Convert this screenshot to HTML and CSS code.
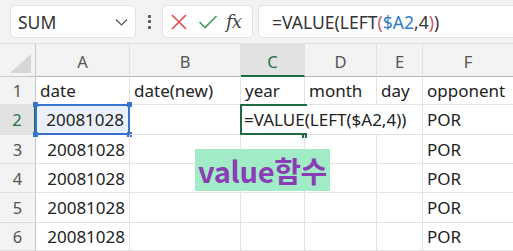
FILE: index.html
```html
<!DOCTYPE html>
<html>
<head>
<meta charset="utf-8">
<link rel="stylesheet" href="styles.css">
</head>
<body>
<div class="app">
  <div class="toolbar">
    <div class="namebox">
      <span class="name">SUM</span>
      <svg class="chev" width="13" height="8" viewBox="0 0 13 8"><path d="M1 1.5 L6.5 7 L12 1.5" fill="none" stroke="#555" stroke-width="1.2"/></svg>
    </div>
    <div class="kebab"><i></i><i></i><i></i></div>
    <div class="fxbox">
      <svg width="18" height="18" viewBox="0 0 18 18"><path d="M2 2 L16 16 M16 2 L2 16" stroke="#e5484d" stroke-width="1.6" fill="none"/></svg>
      <svg width="20" height="16" viewBox="0 0 20 16"><path d="M1.5 8 L7 13.5 L18.5 2" stroke="#3d9f57" stroke-width="1.6" fill="none"/></svg>
      <span class="fx">fx</span>
    </div>
    <div class="formula">=VALUE(LEFT<span class="pk">(</span><span class="bl">$A2</span>,4<span class="pk">)</span>)</div>
  </div>
  <div class="sheet">
    <div class="corner hdr"><svg width="22" height="19" viewBox="0 0 22 19"><path d="M21 0 L21 19 L0 19 Z" fill="#d6d6d6"/></svg></div>
    <div class="hdr col">A</div>
    <div class="hdr col">B</div>
    <div class="hdr col active-col">C</div>
    <div class="hdr col">D</div>
    <div class="hdr col">E</div>
    <div class="hdr col last">F</div>

    <div class="hdr row">1</div>
    <div class="cell">date</div>
    <div class="cell">date(new)</div>
    <div class="cell">year</div>
    <div class="cell">month</div>
    <div class="cell">day</div>
    <div class="cell last">opponent</div>

    <div class="hdr row active-row">2</div>
    <div class="cell ref num">20081028<i class="h tl"></i><i class="h tr"></i><i class="h bl"></i><i class="h br"></i></div>
    <div class="cell"></div>
    <div class="cell edit">=VALUE(LEFT($A2,4))<i class="gh"></i></div>
    <div class="cell last">POR</div>

    <div class="hdr row">3</div>
    <div class="cell num">20081028</div>
    <div class="cell"></div><div class="cell"></div><div class="cell"></div><div class="cell"></div>
    <div class="cell last">POR</div>

    <div class="hdr row">4</div>
    <div class="cell num">20081028</div>
    <div class="cell"></div><div class="cell"></div><div class="cell"></div><div class="cell"></div>
    <div class="cell last">POR</div>

    <div class="hdr row">5</div>
    <div class="cell num">20081028</div>
    <div class="cell"></div><div class="cell"></div><div class="cell"></div><div class="cell"></div>
    <div class="cell last">POR</div>

    <div class="hdr row">6</div>
    <div class="cell num">20081028</div>
    <div class="cell"></div><div class="cell"></div><div class="cell"></div><div class="cell"></div>
    <div class="cell last">POR</div>

    <div class="label">value함수</div>
  </div>
</div>
</body>
</html>
```
FILE: styles.css
```css
* { box-sizing: border-box; }
html, body { margin: 0; padding: 0; }
body {
  width: 513px; height: 251px; overflow: hidden; background: #fff;
  font-family: "Noto Sans", "Open Sans", "Noto Sans CJK KR", sans-serif;
  color: #222;
}
.app { display: flex; flex-direction: column; width: 513px; height: 251px; }
.toolbar {
  height: 44px; background: #f3f3f3; border-bottom: 1px solid #e2e2e2;
  display: flex; align-items: center; padding-left: 10px; gap: 0;
}
.namebox {
  width: 126px; height: 33px; background: #fff; border: 1px solid #e3e3e3; border-radius: 5px;
  display: flex; align-items: center; justify-content: space-between; padding: 0 7px 0 7px;
}
.name { font-size: 17.5px; color: #333; }
.kebab { width: 26px; display: flex; flex-direction: column; align-items: center; gap: 2.5px; }
.kebab i { width: 3px; height: 3px; background: #555; display: block; border-radius: 1px; }
.fxbox {
  width: 91px; height: 33px; background: #fff; border: 1px solid #e3e3e3; border-radius: 5px;
  display: flex; align-items: center; padding-left: 7px; gap: 10px;
}
.fx { font-family: "DejaVu Serif", "Liberation Serif", serif; font-style: italic; font-size: 18px; color: #444; margin-left: -2px; letter-spacing: -1px; }
.formula {
  margin-left: 5px; flex: 1; height: 33px; background: #fff; border: 1px solid #e3e3e3; border-right: none;
  border-radius: 5px 0 0 5px; display: flex; align-items: center; padding-left: 13px;
  font-size: 17.5px; color: #333; white-space: pre;
}
.pk { color: #c9556c; }
.bl { color: #2f7dc7; }

.sheet {
  position: relative; flex: 1;
  display: grid;
  grid-template-columns: 36px 94px 111px 64px 72px 46px 1fr;
  grid-template-rows: 33px 28px 30px 29px 29px 30px 28px;
  font-size: 17px;
}
.hdr { background: #f3f3f3; color: #555; display: flex; align-items: center; justify-content: center; }
.corner { justify-content: flex-end; align-items: flex-end; padding: 0 3px 3px 0; border-right: 1px solid #c8c8c8; border-bottom: 1px solid #c8c8c8; }
.col { border-bottom: 1px solid #b8b8b8; border-right: 1px solid #e0e0e0; padding-top: 3px; font-size: 16.5px; }
.col.last { border-right: none; }
.active-col { background: #e2e2e2; color: #217346; border-bottom: 2px solid #1e6b41; }
.row { border-right: 1px solid #c8c8c8; border-bottom: 1px solid #e0e0e0; font-size: 16.5px; }
.active-row { background: #e2e2e2; color: #217346; border-right: 2px solid #1e6b41; }
.cell {
  position: relative; border-right: 1px solid #e2e2e2; border-bottom: 1px solid #e2e2e2;
  display: flex; align-items: center; padding-left: 4px; white-space: nowrap; color: #222;
}
.cell.last { border-right: none; }
.num { justify-content: flex-end; padding-right: 4px; }
.ref { background: #ebf1fb; border: 2px solid #3a72cf; margin: -1px 0 0 -1px; }
.h { position: absolute; width: 5px; height: 5px; background: #3a72cf; display: block; }
.h.tl { left: -4px; top: -4px; }
.h.tr { right: -4px; top: -4px; }
.h.bl { left: -4px; bottom: -4px; }
.h.br { right: -4px; bottom: -4px; }
.edit { grid-column: span 3; padding-left: 3px; }
.edit::before {
  content: ""; position: absolute; left: -1px; top: -1px; bottom: -1px; width: 65px;
  border: 2px solid #1e6b41; border-right: none;
}
.gh { position: absolute; left: 61px; bottom: -4px; width: 5px; height: 5px; background: #1e6b41; display: block; }
.label {
  position: absolute; left: 195px; top: 105px; width: 135px; height: 42px;
  background: #a1ecc6; color: #8a3db5; font-weight: 700; font-size: 29px;
  font-family: "Noto Sans CJK KR", "Noto Sans", sans-serif;
  display: flex; align-items: center; justify-content: center; z-index: 3; letter-spacing: -0.3px;
}
```
